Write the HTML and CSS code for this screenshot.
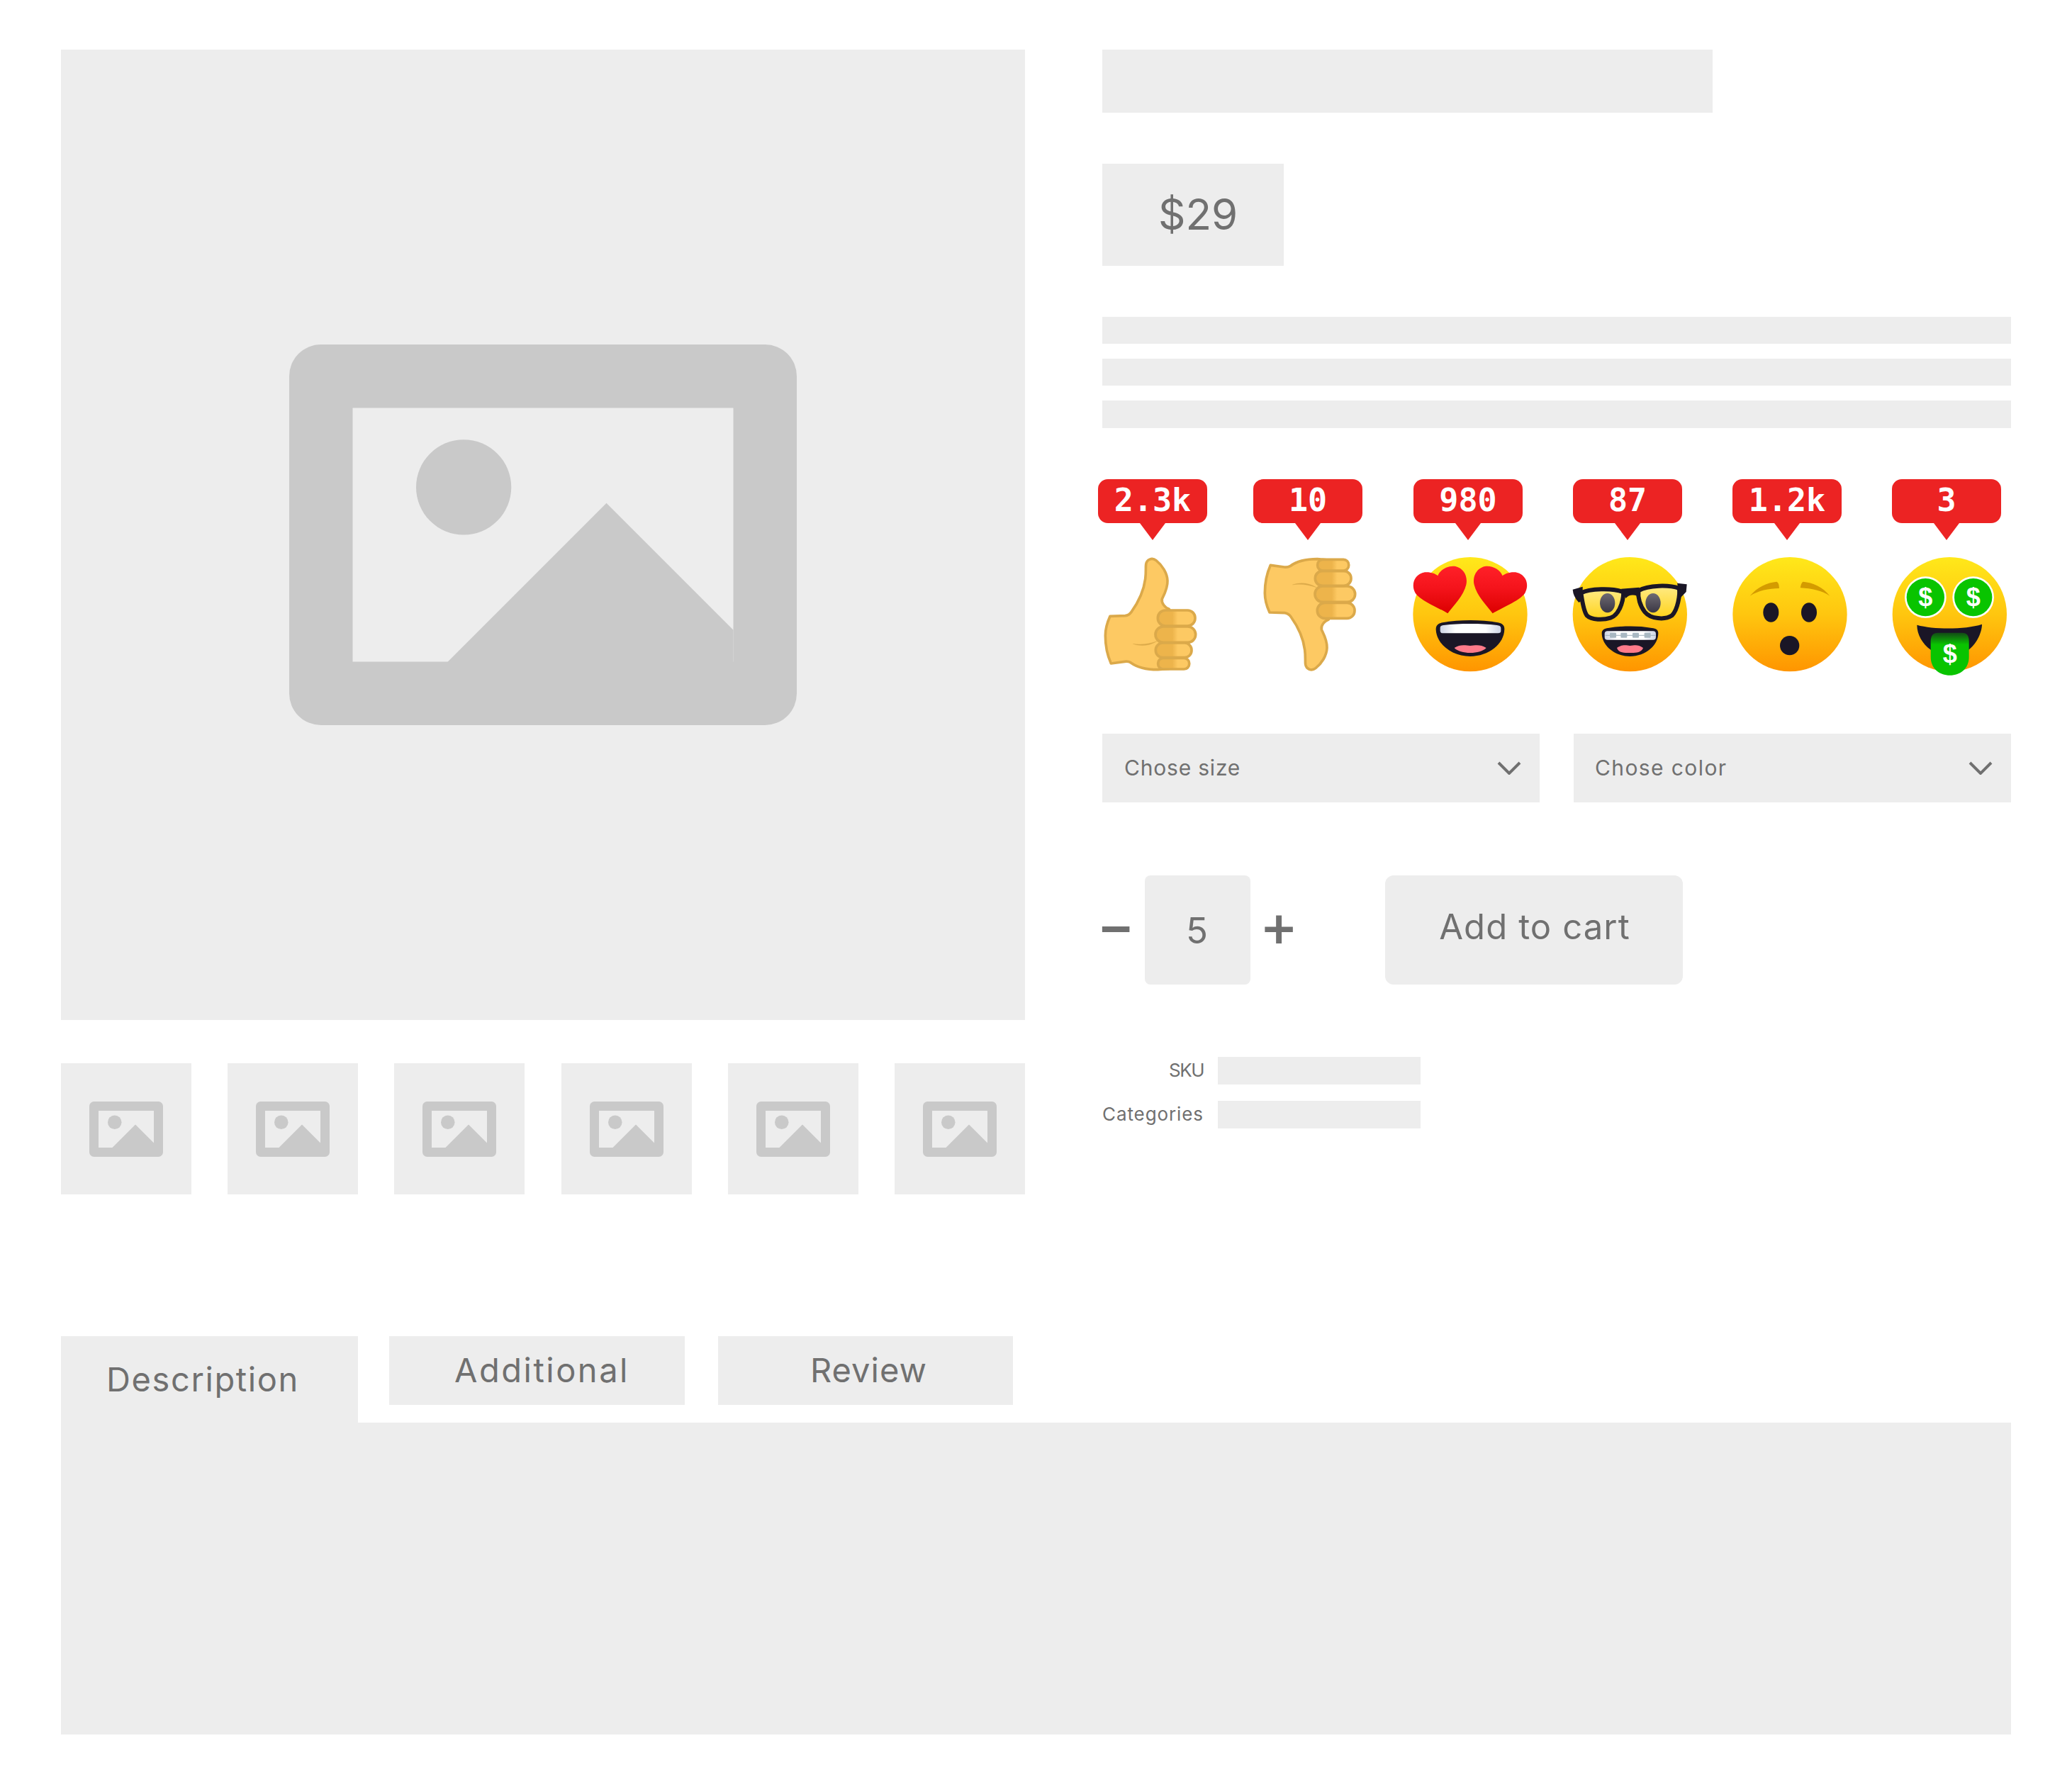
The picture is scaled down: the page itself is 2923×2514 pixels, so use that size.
FILE: index.html
```html
<!DOCTYPE html>
<html lang="en">
<head>
<meta charset="utf-8">
<title>Product page wireframe</title>
<link rel="stylesheet" href="styles.css">
</head>
<body>
<svg class="defs" width="0" height="0" aria-hidden="true">
  <defs>
    <linearGradient id="face" x1="0" y1="0" x2="0" y2="1">
      <stop offset="0" stop-color="#ffe81a"/><stop offset=".5" stop-color="#ffc60f"/><stop offset="1" stop-color="#ff9500"/>
    </linearGradient>
    <linearGradient id="finger" gradientUnits="userSpaceOnUse" x1="236" y1="0" x2="412" y2="0">
      <stop offset="0" stop-color="#edb44b"/><stop offset=".43" stop-color="#edb44b"/><stop offset=".56" stop-color="#fdc963"/><stop offset="1" stop-color="#fdc963"/>
    </linearGradient>
    <linearGradient id="heart" x1="0" y1="0" x2="0" y2="1">
      <stop offset="0" stop-color="#ff2028"/><stop offset=".45" stop-color="#f5141c"/><stop offset="1" stop-color="#dc0000"/>
    </linearGradient>
    <linearGradient id="teeth" x1="0" y1="0" x2="1" y2="0">
      <stop offset="0" stop-color="#cdd3e4"/><stop offset=".25" stop-color="#fff"/><stop offset=".75" stop-color="#fff"/><stop offset="1" stop-color="#cdd3e4"/>
    </linearGradient>
    <linearGradient id="lens" x1="0" y1="0" x2="0" y2="1">
      <stop offset="0" stop-color="#ffeb85"/><stop offset="1" stop-color="#ffd21a"/>
    </linearGradient>
    <linearGradient id="pupil" x1="0" y1="0" x2="0" y2="1">
      <stop offset="0" stop-color="#6e6a72"/><stop offset="1" stop-color="#3a3744"/>
    </linearGradient>
    <linearGradient id="tongue" x1="0" y1="0" x2="0" y2="1">
      <stop offset="0" stop-color="#134a16"/><stop offset=".28" stop-color="#09c400"/><stop offset="1" stop-color="#09c400"/>
    </linearGradient>
    <g id="hand">
      <path class="hand-body" d="M48 268 L112 266 Q128 264 138 250 C165 212 190 165 197 110 C201 78 198 65 200 48 C203 28 225 18 243 32 C268 52 290 85 291 118 C292 150 276 178 268 195 C264 212 280 232 298 238 L298 490 L250 494 C205 494 165 486 135 464 Q125 458 110 460 L52 468 C35 430 28 390 28 350 C28 320 38 290 48 268 Z"/>
      <rect class="hand-finger" x="250" y="243" width="158" height="66" rx="32"/>
      <rect class="hand-finger" x="240" y="312" width="170" height="67" rx="33"/>
      <rect class="hand-finger" x="241" y="381" width="152" height="62" rx="30"/>
      <rect class="hand-finger" x="251" y="445" width="132" height="47" rx="22"/>
      <path class="hand-crease" d="M145 385 C178 397 215 393 246 374 C215 384 180 391 145 385 Z"/>
    </g>
  </defs>
</svg>

<main class="page">
  <section class="product">
    <div class="gallery">
      <div class="hero">
        <svg class="pic pic-hero" viewBox="0 0 8 6" aria-hidden="true">
          <rect class="pic-frame" width="8" height="6" rx=".5"/>
          <rect class="pic-hole" x="1" y="1" width="6" height="4"/>
          <circle class="pic-frame" cx="2.75" cy="2.25" r=".75"/>
          <path class="pic-frame" d="M2.5 5.1 V5 L5 2.5 L7 4.5 V5.1 Z"/>
        </svg>
      </div>
      <div class="thumbs">
        <div class="thumb"><svg class="pic pic-thumb" viewBox="0 0 8 6" aria-hidden="true"><rect class="pic-frame" width="8" height="6" rx=".5"/><rect class="pic-hole" x="1" y="1" width="6" height="4"/><circle class="pic-frame" cx="2.75" cy="2.25" r=".75"/><path class="pic-frame" d="M2.5 5.1 V5 L5 2.5 L7 4.5 V5.1 Z"/></svg></div>
        <div class="thumb"><svg class="pic pic-thumb" viewBox="0 0 8 6" aria-hidden="true"><rect class="pic-frame" width="8" height="6" rx=".5"/><rect class="pic-hole" x="1" y="1" width="6" height="4"/><circle class="pic-frame" cx="2.75" cy="2.25" r=".75"/><path class="pic-frame" d="M2.5 5.1 V5 L5 2.5 L7 4.5 V5.1 Z"/></svg></div>
        <div class="thumb"><svg class="pic pic-thumb" viewBox="0 0 8 6" aria-hidden="true"><rect class="pic-frame" width="8" height="6" rx=".5"/><rect class="pic-hole" x="1" y="1" width="6" height="4"/><circle class="pic-frame" cx="2.75" cy="2.25" r=".75"/><path class="pic-frame" d="M2.5 5.1 V5 L5 2.5 L7 4.5 V5.1 Z"/></svg></div>
        <div class="thumb"><svg class="pic pic-thumb" viewBox="0 0 8 6" aria-hidden="true"><rect class="pic-frame" width="8" height="6" rx=".5"/><rect class="pic-hole" x="1" y="1" width="6" height="4"/><circle class="pic-frame" cx="2.75" cy="2.25" r=".75"/><path class="pic-frame" d="M2.5 5.1 V5 L5 2.5 L7 4.5 V5.1 Z"/></svg></div>
        <div class="thumb"><svg class="pic pic-thumb" viewBox="0 0 8 6" aria-hidden="true"><rect class="pic-frame" width="8" height="6" rx=".5"/><rect class="pic-hole" x="1" y="1" width="6" height="4"/><circle class="pic-frame" cx="2.75" cy="2.25" r=".75"/><path class="pic-frame" d="M2.5 5.1 V5 L5 2.5 L7 4.5 V5.1 Z"/></svg></div>
        <div class="thumb"><svg class="pic pic-thumb" viewBox="0 0 8 6" aria-hidden="true"><rect class="pic-frame" width="8" height="6" rx=".5"/><rect class="pic-hole" x="1" y="1" width="6" height="4"/><circle class="pic-frame" cx="2.75" cy="2.25" r=".75"/><path class="pic-frame" d="M2.5 5.1 V5 L5 2.5 L7 4.5 V5.1 Z"/></svg></div>
      </div>
    </div>

    <div class="details">
      <div class="title-bar"></div>
      <div class="price">$29</div>
      <div class="desc-lines">
        <div class="line"></div>
        <div class="line"></div>
        <div class="line line-last"></div>
      </div>

      <div class="reactions">
        <div class="reaction">
          <div class="badge badge-first">2.3k</div>
          <svg class="emoji" viewBox="-45 0 525 525" aria-hidden="true"><use href="#hand"/></svg>
        </div>
        <div class="reaction">
          <div class="badge badge-second">10</div>
          <svg class="emoji" viewBox="-45 0 525 525" aria-hidden="true"><use href="#hand" transform="translate(0 520) scale(1 -1)"/></svg>
        </div>
        <div class="reaction">
          <div class="badge">980</div>
          <svg class="emoji" viewBox="0 0 525 525" aria-hidden="true">
            <circle cx="267" cy="260" r="242" fill="url(#face)"/>
            <path class="heart" d="M172 256 C140 235 60 205 35 170 C15 135 30 90 75 82 C100 80 120 88 130 97 C140 70 175 52 205 57 C240 65 258 100 250 135 C240 180 195 225 172 256 Z"/>
            <path class="heart" d="M362 256 C394 235 474 205 499 170 C519 135 504 90 459 82 C434 80 414 88 404 97 C394 70 359 52 329 57 C294 65 276 100 284 135 C294 180 339 225 362 256 Z"/>
            <path class="ink" d="M122 322 C122 305 135 298 150 295 C225 282 310 282 385 295 C400 298 412 305 412 322 C412 385 345 438 267 438 C190 438 122 385 122 322 Z"/>
            <path class="teeth" d="M140 318 C140 310 145 307 155 306 C225 298 310 298 380 306 C390 307 397 310 397 318 L397 330 Q397 340 385 340 L150 340 Q140 340 140 330 Z"/>
            <path class="tongue" d="M200 402 C225 385 250 392 267 393 C285 392 310 385 335 402 C310 430 225 430 200 402 Z"/>
          </svg>
        </div>
        <div class="reaction">
          <div class="badge">87</div>
          <svg class="emoji" viewBox="-6 0 525 525" aria-hidden="true">
            <circle cx="262" cy="260" r="242" fill="url(#face)"/>
            <path class="lens" d="M55 170 C90 150 190 148 232 165 C240 175 225 260 180 275 C150 285 100 285 80 265 C65 245 60 200 55 170 Z"/>
            <path class="lens" d="M298 160 C340 135 430 135 470 150 C475 175 465 240 440 265 C410 285 350 280 325 250 C305 225 295 190 298 160 Z"/>
            <path class="ink" d="M20 155 L62 143 L62 200 L46 210 Q22 185 20 155 Z"/>
            <path class="ink" d="M503 133 L500 165 L474 192 L462 128 Z"/>
            <path class="ink" d="M225 152 L302 146 L293 182 Q262 172 245 192 Z"/>
            <ellipse class="pupil" cx="167" cy="212" rx="32" ry="41"/>
            <ellipse class="pupil" cx="360" cy="212" rx="32" ry="41"/>
            <path class="ink" d="M143 340 C143 325 155 320 170 318 C230 308 300 308 355 318 C372 320 382 325 382 340 C382 390 330 438 262 438 C195 438 143 390 143 340 Z"/>
            <rect class="teeth" x="155" y="331" width="217" height="37" rx="12"/>
            <path class="wire" d="M158 349 H370"/>
            <rect class="bracket" x="177" y="338" width="27" height="21" rx="3"/>
            <rect class="bracket" x="223" y="338" width="27" height="21" rx="3"/>
            <rect class="bracket" x="273" y="338" width="27" height="21" rx="3"/>
            <rect class="bracket" x="323" y="338" width="27" height="21" rx="3"/>
            <path class="tongue" d="M207 402 C230 385 250 392 262 393 C280 392 295 385 318 402 C310 425 280 423 262 423 C240 423 215 425 207 402 Z"/>
          </svg>
        </div>
        <div class="reaction">
          <div class="badge">1.2k</div>
          <svg class="emoji" viewBox="-6 0 525 525" aria-hidden="true">
            <circle cx="264" cy="260" r="242" fill="url(#face)"/>
            <path class="brow" d="M95 182 C125 145 170 125 208 122 Q218 125 219 150 C175 150 130 160 95 182 Z"/>
            <path class="brow" d="M308 148 Q312 125 320 122 C360 125 405 145 433 182 C400 160 355 150 308 148 Z"/>
            <ellipse class="ink" cx="184" cy="252" rx="33" ry="41"/>
            <ellipse class="ink" cx="345" cy="252" rx="33" ry="41"/>
            <ellipse class="ink" cx="263" cy="392" rx="41" ry="41"/>
          </svg>
        </div>
        <div class="reaction">
          <div class="badge">3</div>
          <svg class="emoji" viewBox="-6 0 525 525" aria-hidden="true">
            <circle cx="265" cy="260" r="242" fill="url(#face)"/>
            <circle class="coin-ring" cx="163" cy="188" r="88"/>
            <circle class="coin" cx="163" cy="188" r="80"/>
            <circle class="coin-ring" cx="365" cy="188" r="88"/>
            <circle class="coin" cx="365" cy="188" r="80"/>
            <text class="dollar" x="163" y="226">$</text>
            <text class="dollar" x="365" y="226">$</text>
            <path class="ink" d="M127 305 C200 325 330 325 402 302 C402 340 375 390 345 410 L185 410 C150 385 127 345 127 305 Z"/>
            <path fill="url(#tongue)" d="M185 375 C185 350 195 338 215 338 L318 338 C338 338 347 350 347 375 L347 440 C347 490 310 518 266 518 C222 518 185 490 185 440 Z"/>
            <text class="dollar" x="266" y="466">$</text>
          </svg>
        </div>
      </div>

      <div class="selects">
        <div class="select"><span class="select-size">Chose size</span><svg class="chevron" viewBox="0 0 34 19" aria-hidden="true"><path d="M2 2 L17 17 L32 2"/></svg></div>
        <div class="select"><span class="select-color">Chose color</span><svg class="chevron" viewBox="0 0 34 19" aria-hidden="true"><path d="M2 2 L17 17 L32 2"/></svg></div>
      </div>

      <div class="buy-row">
        <div class="stepper">
          <span class="step step-minus">−</span>
          <span class="qty">5</span>
          <span class="step step-plus">+</span>
        </div>
        <div class="add-cart">Add to cart</div>
      </div>

      <div class="meta">
        <div class="meta-row"><span class="meta-label meta-sku">SKU</span><span class="meta-value"></span></div>
        <div class="meta-row"><span class="meta-label meta-cat">Categories</span><span class="meta-value"></span></div>
      </div>
    </div>
  </section>

  <section class="tabs">
    <div class="tab-bar">
      <div class="tab tab-active">Description</div>
      <div class="tab tab-additional">Additional</div>
      <div class="tab tab-review">Review</div>
    </div>
    <div class="tab-panel"></div>
  </section>
</main>
</body>
</html>
```

FILE: styles.css
```css
* { box-sizing: border-box; }

html, body { margin: 0; background: #fff; }

body {
  font-family: "Inter", "Liberation Sans", sans-serif;
  color: #707070;
}

.defs { position: absolute; }

.page {
  width: 2923px;
  height: 2514px;
  padding: 70px 86px 68px;
}

.product {
  display: flex;
  gap: 109px;
  height: 1815px;
}

.gallery { width: 1360px; flex: none; }

.hero {
  height: 1369px;
  background: #ededed;
  display: flex;
  align-items: center;
  justify-content: center;
}

.pic { display: block; }
.pic-hero { width: 716px; height: 537px; }
.pic-thumb { width: 104px; height: 78px; }
.pic-frame { fill: #c9c9c9; }
.pic-hole { fill: #ededed; }

.thumbs {
  display: flex;
  justify-content: space-between;
  margin-top: 61px;
}

.thumb {
  width: 184px;
  height: 185px;
  background: #ededed;
  display: flex;
  align-items: center;
  justify-content: center;
}

.details { width: 1282px; flex: none; }

.title-bar { width: 861px; height: 89px; background: #ededed; }

.price {
  width: 256px;
  height: 144px;
  margin-top: 72px;
  padding: 0 0 3px 79px;
  background: #ededed;
  display: flex;
  align-items: center;
  font-size: 60px;
  font-weight: 400;
}

.desc-lines {
  display: flex;
  flex-direction: column;
  gap: 21px;
  margin-top: 72px;
}

.line { height: 38px; background: #ededed; }
.line-last { height: 39px; }

.reactions {
  display: flex;
  gap: 50px;
  margin: 72px 0 0 -20px;
}

.reaction {
  width: 175px;
  flex: none;
  display: flex;
  flex-direction: column;
}

.badge {
  position: relative;
  width: 154px;
  height: 62px;
  margin: 0 0 42px 9px;
  background: #ec2323;
  border-radius: 14px;
  color: #fff;
  font-family: "DejaVu Sans Mono", monospace;
  font-weight: 700;
  font-size: 45px;
  line-height: 60px;
  text-align: center;
}

.badge-first { margin-left: 14px; }
.badge-second { margin-left: 8px; }

.badge::after {
  content: "";
  position: absolute;
  left: 59px;
  top: 62px;
  border-style: solid;
  border-width: 24px 18px 0;
  border-color: #ec2323 transparent transparent;
}

.emoji { display: block; width: 175px; height: 175px; overflow: visible; }

.hand-body { fill: #fdc963; stroke: #dba94a; stroke-width: 11; stroke-linejoin: round; }
.hand-finger { fill: url(#finger); stroke: #dba94a; stroke-width: 11; }
.hand-crease { fill: #dba94a; stroke: #dba94a; stroke-width: 1; }

.heart { fill: url(#heart); }
.ink { fill: #1a1626; }
.teeth { fill: url(#teeth); }
.tongue { fill: #ff7a8a; }
.lens { fill: url(#lens); stroke: #1a1626; stroke-width: 18; stroke-linejoin: round; }
.pupil { fill: url(#pupil); }
.wire { stroke: #9fb0bb; stroke-width: 3; fill: none; }
.bracket { fill: #a9b8c2; }
.brow { fill: #d49b00; }
.coin-ring { fill: #fff; }
.coin { fill: #09c400; }

.dollar {
  fill: #fff;
  font-family: "Liberation Sans", sans-serif;
  font-weight: 700;
  font-size: 108px;
  text-anchor: middle;
}

.selects {
  display: grid;
  grid-template-columns: 617px 617px;
  gap: 48px;
  margin-top: 80px;
}

.select {
  height: 97px;
  padding: 0 26px 0 31px;
  background: #ededed;
  display: flex;
  align-items: center;
  justify-content: space-between;
  font-size: 30px;
}

.select > span { padding-bottom: 2px; }
.select-size { letter-spacing: .8px; }
.select-color { letter-spacing: 1.4px; margin-left: -1px; }

.chevron { width: 34px; height: 19px; flex: none; }
.chevron path { fill: none; stroke: #707070; stroke-width: 4; }

.buy-row {
  display: flex;
  margin-top: 103px;
}

.stepper {
  display: flex;
  align-items: center;
  width: 399px;
  flex: none;
}

.step {
  display: flex;
  justify-content: center;
  padding-bottom: 12px;
  font-weight: 500;
  font-size: 82px;
  line-height: 1;
}

.step-minus { width: 38px; margin-right: 22px; }
.step-plus { width: 40px; margin-left: 20px; }

.qty {
  width: 149px;
  height: 154px;
  padding-right: 2px;
  background: #ededed;
  border-radius: 8px;
  display: flex;
  align-items: center;
  justify-content: center;
  font-size: 51px;
  font-weight: 400;
}

.add-cart {
  width: 420px;
  height: 154px;
  background: #ededed;
  border-radius: 12px;
  display: flex;
  align-items: center;
  justify-content: center;
  padding: 0 0 9px 2px;
  font-size: 49px;
  font-weight: 400;
  letter-spacing: 1.1px;
}

.meta {
  display: flex;
  flex-direction: column;
  gap: 23px;
  margin-top: 102px;
}

.meta-row { display: flex; align-items: center; gap: 20px; }

.meta-label {
  width: 143px;
  padding-bottom: 3px;
  text-align: right;
  font-size: 26px;
  white-space: nowrap;
}

.meta-sku { letter-spacing: -1.5px; }
.meta-cat { letter-spacing: .9px; }

.meta-value { width: 286px; height: 39px; background: #ededed; flex: none; }

.tab-bar { display: flex; align-items: flex-start; }

.tab {
  height: 97px;
  background: #ededed;
  display: flex;
  align-items: center;
  justify-content: center;
  padding-bottom: 3px;
  font-size: 47px;
  font-weight: 400;
}

.tab-active { width: 419px; height: 122px; padding: 0 19px 1px 0; letter-spacing: 1.6px; }
.tab-additional { width: 417px; margin-left: 44px; padding-left: 14px; letter-spacing: 2.5px; }
.tab-review { width: 416px; margin-left: 47px; padding-left: 9px; letter-spacing: 1px; }

.tab-panel { height: 440px; background: #ededed; }
```
